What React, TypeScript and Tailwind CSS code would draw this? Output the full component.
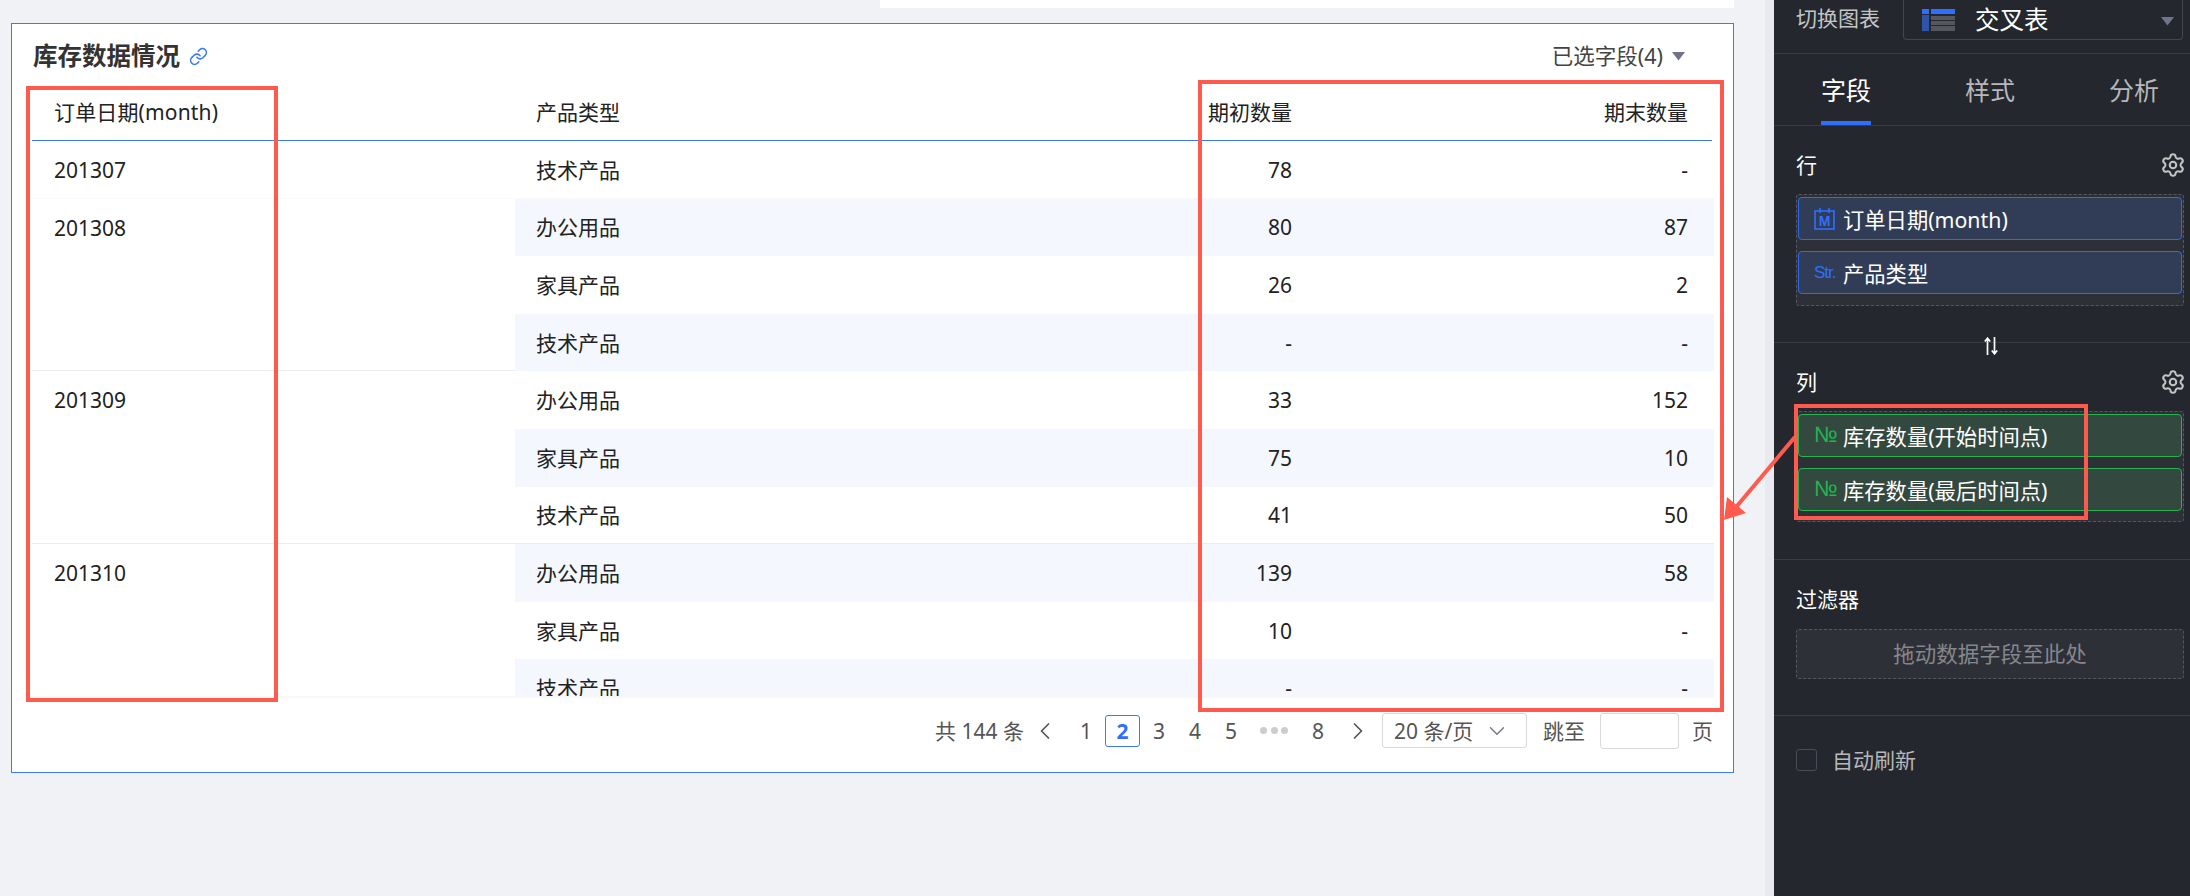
import React from 'react';
import { ChevronDown, ChevronLeft, ChevronRight, Link, Settings } from 'lucide-react';

const groups = [
  { date: '201307', rows: [{ type: '技术产品', start: '78', end: '-' }] },
  {
    date: '201308',
    rows: [
      { type: '办公用品', start: '80', end: '87' },
      { type: '家具产品', start: '26', end: '2' },
      { type: '技术产品', start: '-', end: '-' },
    ],
  },
  {
    date: '201309',
    rows: [
      { type: '办公用品', start: '33', end: '152' },
      { type: '家具产品', start: '75', end: '10' },
      { type: '技术产品', start: '41', end: '50' },
    ],
  },
  {
    date: '201310',
    rows: [
      { type: '办公用品', start: '139', end: '58' },
      { type: '家具产品', start: '10', end: '-' },
      { type: '技术产品', start: '-', end: '-' },
    ],
  },
];

const Caret: React.FC<{ className: string }> = ({ className }) => (
  <svg width="15" height="10" viewBox="0 0 15 10" className={className}>
    <path d="M1 1h13L7.5 9.5z" fill="currentColor" />
  </svg>
);

const DataTable: React.FC = () => {
  let rowIndex = 0;
  return (
    <div className="flex flex-col">
      <div className="mr-[2px] flex h-[61px] shrink-0 items-center border-b border-[#3b7cf6] pt-[3px] text-[21px] leading-[28px] text-[#222]">
        <div className="w-[483px] pl-[22px] tracking-[0.15px]">订单日期(month)</div>
        <div className="w-[385px] pl-[21px]">产品类型</div>
        <div className="w-[414px] pr-[22px] text-right">期初数量</div>
        <div className="flex-1 pr-[24px] text-right">期末数量</div>
      </div>
      <div className="h-[557px] overflow-hidden border-b-2 border-[#f7f7f7]">
        {groups.map((group, g) => (
          <div key={group.date} className={g === 0 ? 'flex' : g === 1 ? '-mt-px flex border-t border-[#fafafa]' : '-mt-px flex border-t border-[#ececec]'}>
            <div className="w-[483px] shrink-0 pl-[22px] pt-[15px] text-[21px] leading-[28px] text-[#222]">{group.date}</div>
            <div className="flex-1">
              {group.rows.map(row => {
                rowIndex += 1;
                return (
                  <div
                    key={row.type}
                    className={
                      rowIndex % 2 === 0
                        ? 'flex h-[57.6px] items-center bg-[#f4f8fe] text-[21px] leading-[28px] text-[#222]'
                        : 'flex h-[57.6px] items-center text-[21px] leading-[28px] text-[#222]'
                    }
                  >
                    <div className="w-[385px] pl-[21px]">{row.type}</div>
                    <div className="w-[414px] pr-[22px] text-right">{row.start}</div>
                    <div className="flex-1 pr-[26px] text-right">{row.end}</div>
                  </div>
                );
              })}
            </div>
          </div>
        ))}
      </div>
    </div>
  );
};

const Pagination: React.FC = () => (
  <div className="mt-[14px] flex h-[37px] items-center justify-end pr-[1px] text-[21px] leading-[28px] text-[#555]">
    <span>共 144 条</span>
    <ChevronLeft size={28} strokeWidth={1.5} className="ml-[7px]" />
    <span className="ml-[20px] w-[14px] text-center">1</span>
    <span className="ml-[12px] flex h-[32px] w-[35px] items-center justify-center rounded-[3px] border border-[#3b7cf6] font-bold text-[#2f6fff]">2</span>
    <span className="ml-[12px] w-[14px] text-center">3</span>
    <span className="ml-[22px] w-[14px] text-center">4</span>
    <span className="ml-[22px] w-[14px] text-center">5</span>
    <span className="ml-[22px] flex w-[28px] justify-between">
      <i className="h-[7px] w-[7px] rounded-full bg-[#ccc]" />
      <i className="h-[7px] w-[7px] rounded-full bg-[#ccc]" />
      <i className="h-[7px] w-[7px] rounded-full bg-[#ccc]" />
    </span>
    <span className="ml-[23px] w-[14px] text-center">8</span>
    <ChevronRight size={28} strokeWidth={1.5} className="ml-[19px]" />
    <div className="ml-[10px] flex h-[35px] w-[145px] items-center rounded-[3px] border border-[#d9d9d9] pl-[11px]">
      20 条/页
      <ChevronDown size={26} strokeWidth={1.25} className="ml-[11px] text-[#70748a]" />
    </div>
    <span className="ml-[16px]">跳至</span>
    <div className="ml-[15px] h-[36px] w-[79px] rounded-[3px] border border-[#d9d9d9]" />
    <span className="ml-[13px]">页</span>
  </div>
);

const TableIcon: React.FC = () => (
  <svg width="33" height="22" viewBox="0 0 33 22" className="shrink-0">
    <rect x="0" y="0" width="7" height="5" fill="#2f6fff" />
    <rect x="0" y="6" width="7" height="16" fill="#2f55a8" />
    <rect x="9" y="0" width="24" height="5" fill="#2f6fff" />
    <rect x="9" y="7" width="24" height="4" fill="#55575e" />
    <rect x="9" y="12" width="24" height="4" fill="#55575e" />
    <rect x="9" y="17" width="24" height="5" fill="#55575e" />
  </svg>
);

const MonthIcon: React.FC = () => (
  <svg width="21" height="22" viewBox="0 0 21 22" className="shrink-0">
    <rect x="1" y="3" width="19" height="18" fill="none" stroke="#2f6fff" strokeWidth="1.6" />
    <path d="M6 0v5M15 0v5" stroke="#2f6fff" strokeWidth="1.6" />
    <text x="10.5" y="17.5" textAnchor="middle" fontSize="14" fontWeight="700" fontFamily="Liberation Sans" fill="#2f6fff">M</text>
  </svg>
);

const SwapIcon: React.FC = () => (
  <svg width="14" height="18" viewBox="0 0 14 18" fill="none" stroke="#fff" strokeWidth="1.7">
    <path d="M3.5 18V1M.8 4.5 3.5 1.2l2.7 3.3M10.5 0v17M7.8 13.5l2.7 3.3 2.7-3.3" />
  </svg>
);

const SectionTitle: React.FC<{ label: string; gear?: boolean }> = ({ label, gear }) => (
  <div className="flex h-[28px] items-center justify-between text-[21px] leading-[28px] text-white">
    {label}
    {gear && <Settings size={26} strokeWidth={1.9} className="-mr-[2px] text-[#c4c4c4]" />}
  </div>
);

const Pill: React.FC<{ icon: React.ReactNode; label: string; green?: boolean }> = ({ icon, label, green }) => (
  <div
    className={
      green
        ? 'flex h-[43px] items-center rounded-[4px] border border-[#22b54f] bg-[#33483f] pl-[15px] pt-[2px] text-[21.3px] leading-[28px] text-white'
        : 'flex h-[43px] items-center rounded-[4px] border border-[#2e6be6] bg-[#313c57] pl-[15px] pt-[2px] text-[21.3px] leading-[28px] text-white'
    }
  >
    <span className="-mt-[2px] flex w-[29px] shrink-0 items-center">{icon}</span>
    {label}
  </div>
);

const NumberIcon: React.FC = () => (
  <span className="-mt-[2px] font-['Liberation_Sans'] text-[22px] leading-[24px] text-[#22b54f]">№</span>
);

const SidePanel: React.FC = () => (
  <div className="flex w-[416px] shrink-0 flex-col bg-[#24272e]">
    <div className="flex h-[54px] shrink-0 border-b border-[#3a3c42] pl-[22px] pr-[7px]">
      <span className="mt-[4px] text-[21px] leading-[28px] text-[#c4c4c4]">切换图表</span>
      <div className="ml-[23px] flex h-[40px] flex-1 items-center rounded-b-[4px] border-x border-b border-[#44464d] pl-[18px] pr-[7px]">
        <TableIcon />
        <span className="ml-[20px] text-[24.5px] leading-[32px] text-white">交叉表</span>
        <Caret className="ml-auto mt-[2px] text-[#70748a]" />
      </div>
    </div>
    <div className="flex h-[72px] shrink-0 items-stretch border-b border-[#3a3c42] pl-[47px] text-[25px] leading-[32px]">
      <span className="flex w-[50px] items-center justify-center border-b-4 border-[#2f6fff] pt-[4px] text-white">字段</span>
      <span className="ml-[94px] flex items-center text-[#b8b8b8]">样式</span>
      <span className="ml-[94px] flex items-center text-[#b8b8b8]">分析</span>
    </div>
    <div className="h-[217px] shrink-0 border-b border-[#3a3c42] pl-[22px] pr-[6px] pt-[25px]">
      <SectionTitle label="行" gear />
      <div className="mt-[15px] flex h-[112px] flex-col gap-[11px] rounded-[3px] border border-dashed border-[#55575e] bg-[#2e3038] px-[1px] pt-[2px]">
        <Pill icon={<MonthIcon />} label="订单日期(month)" />
        <Pill icon={<span className="font-['Liberation_Sans'] text-[17px] tracking-[-1px] text-[#2f6fff]">Str.</span>} label="产品类型" />
      </div>
    </div>
    <div className="relative h-[217px] shrink-0 border-b border-[#3a3c42] pl-[22px] pr-[6px] pt-[25px]">
      <span className="absolute left-[210px] top-[-6px]"><SwapIcon /></span>
      <SectionTitle label="列" gear />
      <div className="mt-[15px] flex h-[111px] flex-col gap-[11px] rounded-[3px] border border-dashed border-[#55575e] bg-[#2e3038] px-[1px] pt-[2px]">
        <Pill green icon={<NumberIcon />} label="库存数量(开始时间点)" />
        <Pill green icon={<NumberIcon />} label="库存数量(最后时间点)" />
      </div>
    </div>
    <div className="h-[156px] shrink-0 border-b border-[#3a3c42] pl-[22px] pr-[6px] pt-[25px]">
      <SectionTitle label="过滤器" />
      <div className="mt-[16px] flex h-[50px] items-center justify-center rounded-[3px] border border-dashed border-[#55575e] bg-[#2e3038] text-[21.5px] leading-[28px] text-[#85878c]">
        拖动数据字段至此处
      </div>
    </div>
    <div className="mt-[30px] flex items-center pl-[22px]">
      <span className="h-[22px] w-[21px] rounded-[3px] border border-[#4a4c52]" />
      <span className="ml-[15px] text-[21px] leading-[28px] text-[#b8b8b8]">自动刷新</span>
    </div>
  </div>
);

const App: React.FC = () => {
  return (
    <div className="relative flex h-[896px] w-[2190px] overflow-hidden bg-[#f0f2f6] font-['Noto_Sans','Noto_Sans_CJK_SC',sans-serif]">
      <div className="w-[1765px] shrink-0 pl-[11px]">
        <div className="ml-[869px] h-[8px] w-[854px] bg-white" />
        <div className="mt-[15px] h-[750px] w-[1723px] border border-[#3b7cf6] bg-white pl-[20px] pr-[19px]">
          <div className="flex h-[56px] items-center justify-between pt-[8px]">
            <div className="flex items-center pl-[1px]">
              <span className="text-[24.5px] font-bold leading-[30px] text-[#333]">库存数据情况</span>
              <Link size={19} strokeWidth={2} className="ml-[9px] text-[#3b7cf6]" />
            </div>
            <div className="flex items-center pr-[28px] text-[21.5px] leading-[28px] text-[#444]">
              已选字段(4)
              <Caret className="ml-[8px] text-[#70748a]" />
            </div>
          </div>
          <DataTable />
          <Pagination />
        </div>
      </div>
      <div className="w-[9px] shrink-0 bg-[#e9eaef]" />
      <SidePanel />

      {/* annotations drawn on top of the screenshot */}
      <div className="absolute left-[26px] top-[86px] h-[616px] w-[252px] border-4 border-[#fe5a4e]" />
      <div className="absolute left-[1198px] top-[80px] h-[632px] w-[526px] border-4 border-[#fe5a4e]" />
      <div className="absolute left-[1794px] top-[404px] h-[116px] w-[294px] border-4 border-[#fe5a4e]" />
      <svg width="90" height="100" viewBox="0 0 90 100" className="absolute left-[1715px] top-[430px]">
        <path d="M80 7 22 76" stroke="#fe5a4e" strokeWidth="4" fill="none" />
        <path d="M9 90 12 67 31 83z" fill="#fe5a4e" />
      </svg>
    </div>
  );
};

export default App;
